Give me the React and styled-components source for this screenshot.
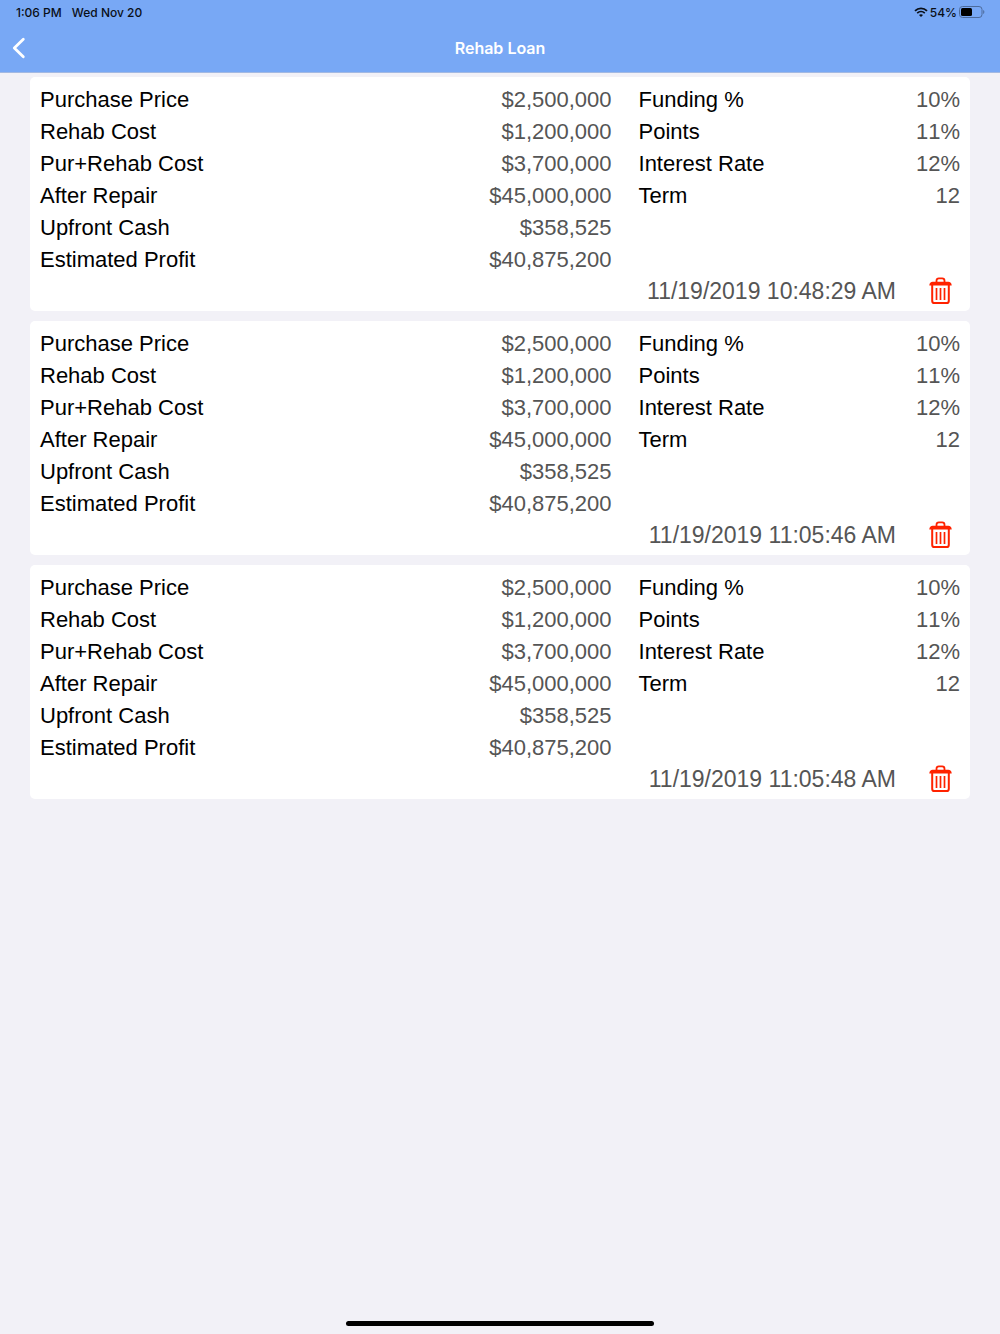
import { useState } from "react";
import styled, { createGlobalStyle } from "styled-components";

const GlobalStyle = createGlobalStyle`
  * {
    box-sizing: border-box;
  }

  body {
    margin: 0;
    background: #f2f1f7;
    font-family: "Liberation Sans", Helvetica, Arial, sans-serif;
  }
`;

const Screen = styled.div`
  display: flex;
  flex-direction: column;
  min-height: 100vh;
`;

const Header = styled.header`
  background: #78a8f5;
  border-bottom: 1px solid #a3b9e2;
  font-family: Inter, "Liberation Sans", sans-serif;
`;

const StatusBar = styled.div`
  display: flex;
  align-items: center;
  justify-content: space-between;
  height: 24px;
  padding: 0 15px 0 16px;
  font-size: 12px;
  font-weight: 500;
  color: #0a0f18;
`;

const StatusGroup = styled.div`
  display: flex;
  align-items: center;
  gap: ${({ $gap }) => $gap}px;
`;

const NavBar = styled.nav`
  display: grid;
  grid-template-columns: 48px 1fr 48px;
  align-items: center;
  height: 48px;
`;

const BackButton = styled.button`
  display: flex;
  align-items: center;
  height: 48px;
  padding: 0 0 0 12px;
  border: 0;
  background: none;
  color: #fff;
  cursor: pointer;
`;

const Title = styled.h1`
  margin: 0;
  font-size: 16px;
  font-weight: 600;
  text-align: center;
  color: #fff;
`;

const LoanList = styled.main`
  display: flex;
  flex: 1;
  flex-direction: column;
  gap: 10px;
  padding: 4px 30px 0;
`;

const Card = styled.article`
  padding: 7px 10px 5px;
  border-radius: 5px;
  background: #fff;
`;

const Columns = styled.div`
  display: grid;
  grid-template-columns: 16fr 9fr;
  gap: 27px;
`;

const Fields = styled.dl`
  margin: 0;
`;

const Field = styled.div`
  display: flex;
  justify-content: space-between;
  font-size: 22px;
  line-height: 32px;
`;

const Label = styled.dt`
  color: #000;
`;

const Value = styled.dd`
  margin: 0;
  font-kerning: none;
  color: #555;
`;

const CardFooter = styled.footer`
  display: flex;
  align-items: center;
  justify-content: flex-end;
  gap: 33px;
  height: 30px;
  padding-right: 7px;
`;

const SavedAt = styled.time`
  font-size: 23px;
  line-height: 30px;
  color: #555;
`;

const DeleteButton = styled.button`
  display: flex;
  padding: 0;
  border: 0;
  background: none;
  color: #ff2200;
  cursor: pointer;
`;

const HomeBar = styled.footer`
  display: flex;
  justify-content: center;
  padding: 8px 0;

  &::after {
    content: "";
    width: 308px;
    height: 5px;
    border-radius: 3px;
    background: #000;
  }
`;

const WifiIcon = () => (
  <svg width="14" height="10" viewBox="0 0 14 10" fill="none" aria-hidden="true">
    <path d="M1 3.9C4.4 .5 9.6 .5 13 3.9" stroke="currentColor" strokeWidth="1.8" />
    <path d="M3.2 6.2C5.4 4.2 8.6 4.2 10.8 6.2" stroke="currentColor" strokeWidth="1.7" />
    <path d="M5 8C6.2 7 7.8 7 9 8L7 10Z" fill="currentColor" />
  </svg>
);

const BatteryIcon = () => (
  <svg width="26" height="12" viewBox="0 0 26 12" aria-hidden="true">
    <rect x=".5" y=".5" width="22.5" height="11" rx="3" fill="none" stroke="#4c6b9c" />
    <rect x="2" y="2" width="11" height="8" rx="1.5" fill="#000" />
    <path d="M24.2 4C25.8 4.6 25.8 7.4 24.2 8Z" fill="#4c6b9c" />
  </svg>
);

const BackIcon = () => (
  <svg width="14" height="22" viewBox="0 0 14 22" fill="none" aria-hidden="true">
    <path
      d="M11.3 2.3L2.3 11L11.3 19.7"
      stroke="currentColor"
      strokeWidth="2.8"
      strokeLinecap="round"
      strokeLinejoin="round"
    />
  </svg>
);

const TrashIcon = () => (
  <svg width="24" height="28" viewBox="0 0 24 28" fill="none" stroke="currentColor" aria-hidden="true">
    <path d="M7.5 5V3.8C7.5 2.2 8.4 1.4 9.8 1.4H13.2C14.6 1.4 15.5 2.2 15.5 3.8V5" strokeWidth="1.8" />
    <path d="M3.7 4.8H19.3C21.3 4.8 22.5 6 22.7 8.6H.3C.5 6 1.7 4.8 3.7 4.8Z" fill="currentColor" stroke="none" />
    <path d="M3.2 8V24C3.2 25.4 4.1 26.1 5.3 26.1H17.7C18.9 26.1 19.8 25.4 19.8 24V8" strokeWidth="2" />
    <path d="M7.5 11V23M11.5 11V23M15.5 11V23" strokeWidth="1.7" />
  </svg>
);

const amounts = [
  ["Purchase Price", "$2,500,000"],
  ["Rehab Cost", "$1,200,000"],
  ["Pur+Rehab Cost", "$3,700,000"],
  ["After Repair", "$45,000,000"],
  ["Upfront Cash", "$358,525"],
  ["Estimated Profit", "$40,875,200"],
];

const terms = [
  ["Funding %", "10%"],
  ["Points", "11%"],
  ["Interest Rate", "12%"],
  ["Term", "12"],
];

const savedLoans = [
  { id: 1, amounts, terms, savedAt: "11/19/2019 10:48:29 AM" },
  { id: 2, amounts, terms, savedAt: "11/19/2019 11:05:46 AM" },
  { id: 3, amounts, terms, savedAt: "11/19/2019 11:05:48 AM" },
];

const FieldList = ({ fields }) => (
  <Fields>
    {fields.map(([label, value]) => (
      <Field key={label}>
        <Label>{label}</Label>
        <Value>{value}</Value>
      </Field>
    ))}
  </Fields>
);

const LoanCard = ({ loan, onDelete }) => (
  <Card>
    <Columns>
      <FieldList fields={loan.amounts} />
      <FieldList fields={loan.terms} />
    </Columns>
    <CardFooter>
      <SavedAt>{loan.savedAt}</SavedAt>
      <DeleteButton type="button" aria-label="Delete" onClick={onDelete}>
        <TrashIcon />
      </DeleteButton>
    </CardFooter>
  </Card>
);

const App = () => {
  const [loans, setLoans] = useState(savedLoans);

  return (
    <>
      <GlobalStyle />
      <Screen>
        <Header>
          <StatusBar>
            <StatusGroup $gap={10}>
              <span>1:06 PM</span>
              <span>Wed Nov 20</span>
            </StatusGroup>
            <StatusGroup $gap={2}>
              <WifiIcon />
              <span>54%</span>
              <BatteryIcon />
            </StatusGroup>
          </StatusBar>
          <NavBar>
            <BackButton type="button" aria-label="Back">
              <BackIcon />
            </BackButton>
            <Title>Rehab Loan</Title>
          </NavBar>
        </Header>
        <LoanList>
          {loans.map((loan) => (
            <LoanCard
              key={loan.id}
              loan={loan}
              onDelete={() => setLoans(loans.filter(({ id }) => id !== loan.id))}
            />
          ))}
        </LoanList>
        <HomeBar />
      </Screen>
    </>
  );
};

export default App;
